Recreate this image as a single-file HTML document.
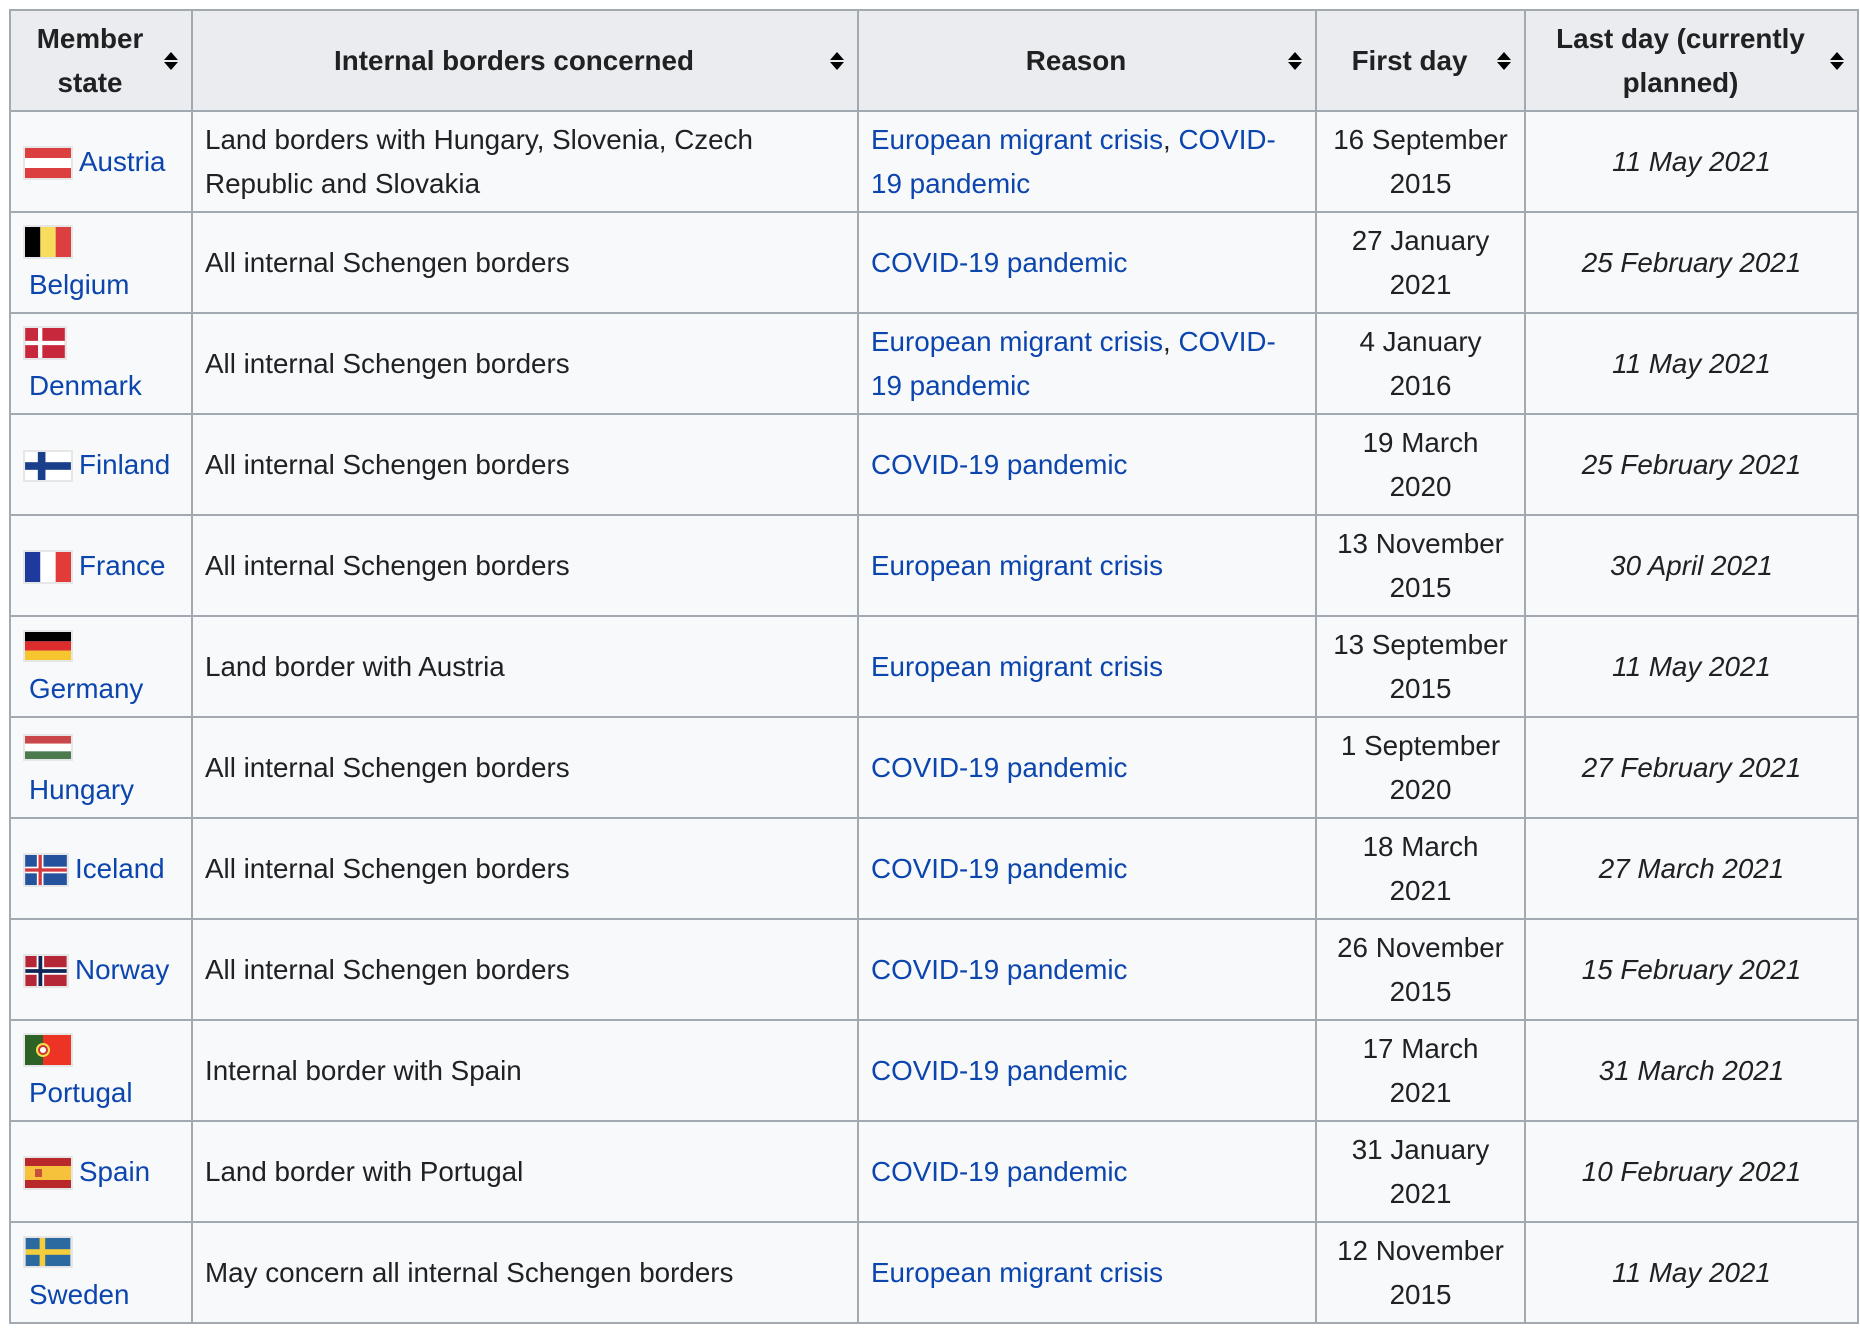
<!DOCTYPE html>
<html><head><meta charset="utf-8"><style>
html,body{margin:0;padding:0;background:#fff;}
body{width:1860px;height:1328px;overflow:hidden;font-family:"Liberation Sans",Arial,sans-serif;color:#202122;}
table{position:absolute;left:9px;top:9px;width:1848px;border-collapse:collapse;table-layout:fixed;background:#f8f9fa;font-size:27.8px;line-height:44px;}
td,th{border:2px solid #a2a9b1;padding:0 12px;vertical-align:middle;}
th{background:#eaecf0;font-weight:bold;text-align:center;position:relative;padding-right:34px;}
tr{height:101px;}
a{color:#0b45ad;text-decoration:none;}
.c{text-align:center;}
.i{text-align:center;font-style:italic;}
.s{position:absolute;right:12px;top:50%;margin-top:-11px;width:16px;height:22px;}
.f{display:inline-block;vertical-align:middle;border:2px solid #e6e6e6;line-height:0;margin-right:6px;}
.m{padding-left:12px;}
.m .n{display:block;padding-left:6px;}
</style></head><body>
<table>
<colgroup><col style="width:182px"><col style="width:666px"><col style="width:458px"><col style="width:209px"><col style="width:333px"></colgroup>
<tr>
<th>Member state<svg class="s" viewBox="0 0 16 22"><path d="M1 10L8 2L15 10Z M1 12L8 20L15 12Z" fill="#000"/></svg></th>
<th>Internal borders concerned<svg class="s" viewBox="0 0 16 22"><path d="M1 10L8 2L15 10Z M1 12L8 20L15 12Z" fill="#000"/></svg></th>
<th>Reason<svg class="s" viewBox="0 0 16 22"><path d="M1 10L8 2L15 10Z M1 12L8 20L15 12Z" fill="#000"/></svg></th>
<th>First day<svg class="s" viewBox="0 0 16 22"><path d="M1 10L8 2L15 10Z M1 12L8 20L15 12Z" fill="#000"/></svg></th>
<th>Last day (currently planned)<svg class="s" viewBox="0 0 16 22"><path d="M1 10L8 2L15 10Z M1 12L8 20L15 12Z" fill="#000"/></svg></th>
</tr>
<tr><td class="m"><span class="f"><svg width="46" height="30" viewBox="0 0 3 3" preserveAspectRatio="none"><rect width="3" height="3" fill="#dc3f3f"/><rect y="1" width="3" height="1" fill="#fff"/></svg></span><a href="#">Austria</a></td>
<td>Land borders with Hungary, Slovenia, Czech Republic and Slovakia</td>
<td><a href="#">European migrant crisis</a>, <a href="#">COVID-19 pandemic</a></td><td class="c">16 September 2015</td><td class="i">11 May 2021</td></tr>
<tr><td class="m"><span class="f"><svg width="46" height="30" viewBox="0 0 3 3" preserveAspectRatio="none"><rect width="1" height="3" fill="#000"/><rect x="1" width="1" height="3" fill="#f8dc5c"/><rect x="2" width="1" height="3" fill="#dc3f3f"/></svg></span><a class="n" href="#">Belgium</a></td>
<td>All internal Schengen borders</td><td><a href="#">COVID-19 pandemic</a></td><td class="c">27 January 2021</td><td class="i">25 February 2021</td></tr>
<tr><td class="m"><span class="f"><svg width="40" height="30" viewBox="0 0 37 28"><rect width="37" height="28" fill="#c8283c"/><rect x="12" width="4" height="28" fill="#fff"/><rect y="12" width="37" height="4" fill="#fff"/></svg></span><a class="n" href="#">Denmark</a></td>
<td>All internal Schengen borders</td><td><a href="#">European migrant crisis</a>, <a href="#">COVID-19 pandemic</a></td><td class="c">4 January 2016</td><td class="i">11 May 2021</td></tr>
<tr><td class="m"><span class="f"><svg width="46" height="28" viewBox="0 0 18 11"><rect width="18" height="11" fill="#fff"/><rect x="5" width="3" height="11" fill="#1a3f8a"/><rect y="4" width="18" height="3" fill="#1a3f8a"/></svg></span><a href="#">Finland</a></td>
<td>All internal Schengen borders</td><td><a href="#">COVID-19 pandemic</a></td><td class="c">19 March 2020</td><td class="i">25 February 2021</td></tr>
<tr><td class="m"><span class="f"><svg width="46" height="30" viewBox="0 0 3 3" preserveAspectRatio="none"><rect width="1" height="3" fill="#1d3a9c"/><rect x="1" width="1" height="3" fill="#fff"/><rect x="2" width="1" height="3" fill="#e33a3a"/></svg></span><a href="#">France</a></td>
<td>All internal Schengen borders</td><td><a href="#">European migrant crisis</a></td><td class="c">13 November 2015</td><td class="i">30 April 2021</td></tr>
<tr><td class="m"><span class="f"><svg width="46" height="28" viewBox="0 0 3 3" preserveAspectRatio="none"><rect width="3" height="1" fill="#000"/><rect y="1" width="3" height="1" fill="#dd2c2c"/><rect y="2" width="3" height="1" fill="#f7c62e"/></svg></span><a class="n" href="#">Germany</a></td>
<td>Land border with Austria</td><td><a href="#">European migrant crisis</a></td><td class="c">13 September 2015</td><td class="i">11 May 2021</td></tr>
<tr><td class="m"><span class="f"><svg width="46" height="23" viewBox="0 0 3 3" preserveAspectRatio="none"><rect width="3" height="1" fill="#c9474a"/><rect y="1" width="3" height="1" fill="#fff"/><rect y="2" width="3" height="1" fill="#4a7a4e"/></svg></span><a class="n" href="#">Hungary</a></td>
<td>All internal Schengen borders</td><td><a href="#">COVID-19 pandemic</a></td><td class="c">1 September 2020</td><td class="i">27 February 2021</td></tr>
<tr><td class="m"><span class="f"><svg width="42" height="30" viewBox="0 0 25 18"><rect width="25" height="18" fill="#24529c"/><rect x="7" width="4" height="18" fill="#fff"/><rect y="7" width="25" height="4" fill="#fff"/><rect x="8" width="2" height="18" fill="#d33a3f"/><rect y="8" width="25" height="2" fill="#d33a3f"/></svg></span><a href="#">Iceland</a></td>
<td>All internal Schengen borders</td><td><a href="#">COVID-19 pandemic</a></td><td class="c">18 March 2021</td><td class="i">27 March 2021</td></tr>
<tr><td class="m"><span class="f"><svg width="42" height="30" viewBox="0 0 22 16"><rect width="22" height="16" fill="#b52636"/><rect x="6" width="4" height="16" fill="#fff"/><rect y="6" width="22" height="4" fill="#fff"/><rect x="7" width="2" height="16" fill="#0d2557"/><rect y="7" width="22" height="2" fill="#0d2557"/></svg></span><a href="#">Norway</a></td>
<td>All internal Schengen borders</td><td><a href="#">COVID-19 pandemic</a></td><td class="c">26 November 2015</td><td class="i">15 February 2021</td></tr>
<tr><td class="m"><span class="f"><svg width="46" height="30" viewBox="0 0 46 30"><rect width="46" height="30" fill="#ec3324"/><rect width="18" height="30" fill="#2d6125"/><circle cx="18" cy="15" r="7" fill="#f4e04d"/><circle cx="18" cy="15" r="4" fill="#fff" stroke="#c33" stroke-width="2"/></svg></span><a class="n" href="#">Portugal</a></td>
<td>Internal border with Spain</td><td><a href="#">COVID-19 pandemic</a></td><td class="c">17 March 2021</td><td class="i">31 March 2021</td></tr>
<tr><td class="m"><span class="f"><svg width="46" height="30" viewBox="0 0 46 30"><rect width="46" height="30" fill="#b9282a"/><rect y="8" width="46" height="14" fill="#f6c23c"/><rect x="10" y="11" width="7" height="8" fill="#c8503a"/></svg></span><a href="#">Spain</a></td>
<td>Land border with Portugal</td><td><a href="#">COVID-19 pandemic</a></td><td class="c">31 January 2021</td><td class="i">10 February 2021</td></tr>
<tr><td class="m"><span class="f"><svg width="46" height="28" viewBox="0 0 16 10"><rect width="16" height="10" fill="#2a6aa0"/><rect x="5" width="2" height="10" fill="#f4cd3d"/><rect y="4" width="16" height="2" fill="#f4cd3d"/></svg></span><a class="n" href="#">Sweden</a></td>
<td>May concern all internal Schengen borders</td><td><a href="#">European migrant crisis</a></td><td class="c">12 November 2015</td><td class="i">11 May 2021</td></tr>
</table>
</body></html>
